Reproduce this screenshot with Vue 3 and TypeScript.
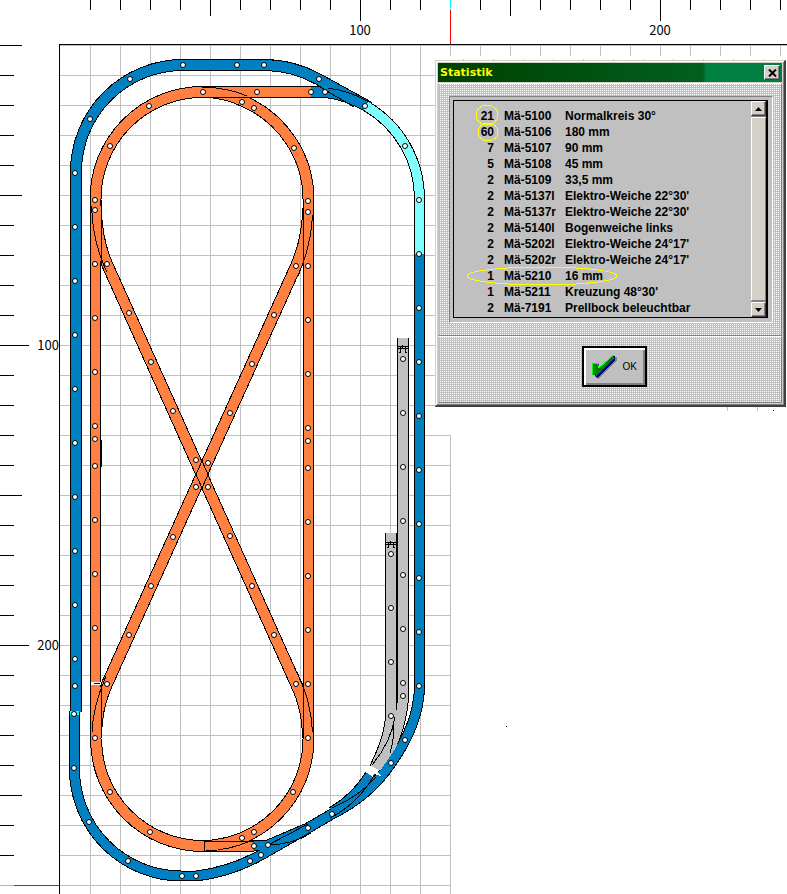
<script setup lang="ts">
interface Part { count: number; code: string; name: string }
interface Track { d: string; w: number; color: string }
type Point = [number, number]

const parts: Part[] = [
  { count: 21, code: 'Mä-5100', name: 'Normalkreis 30°' },
  { count: 60, code: 'Mä-5106', name: '180 mm' },
  { count: 7, code: 'Mä-5107', name: '90 mm' },
  { count: 5, code: 'Mä-5108', name: '45 mm' },
  { count: 2, code: 'Mä-5109', name: '33,5 mm' },
  { count: 2, code: 'Mä-5137l', name: "Elektro-Weiche 22°30'" },
  { count: 2, code: 'Mä-5137r', name: "Elektro-Weiche 22°30'" },
  { count: 2, code: 'Mä-5140l', name: 'Bogenweiche links' },
  { count: 2, code: 'Mä-5202l', name: "Elektro-Weiche 24°17'" },
  { count: 2, code: 'Mä-5202r', name: "Elektro-Weiche 24°17'" },
  { count: 1, code: 'Mä-5210', name: '16 mm' },
  { count: 1, code: 'Mä-5211', name: "Kreuzung 48°30'" },
  { count: 2, code: 'Mä-7191', name: 'Prellbock beleuchtbar' },
]

const range = (n: number): number[] => Array.from({ length: n }, (_, i) => i)

/* Rulers: one tick every 10 cm, longer ones at 50 and 100. */
const topTicks = range(70)
  .map((i) => ({ x: 90.5 + i * 30, step: i + 1 }))
  .filter((t) => t.step !== 13)
  .map((t) => ({ x: t.x, len: t.step % 10 === 0 ? 21 : t.step % 5 === 0 ? 16 : 10 }))
const leftTicks = range(28).map((i) => ({
  y: 45.5 + i * 30,
  len: i > 0 && i % 10 === 0 ? 29 : i % 5 === 0 ? 22 : 14,
}))
const gridX = range(12).map((i) => 90.5 + i * 30)
const gridY = range(28).map((i) => 75.5 + i * 30)
const gridStubs = range(60).map((i) => 450.5 + i * 30)

const blue = '#0080c0'
const cyan = '#80ffff'
const orange = '#ff8040'
const grey = '#c0c0c0'

const tracks: Track[] = [
  { d: 'M403 338 V696 Q402 728 380 770', w: 12, color: grey },
  { d: 'M391 533 V716 Q390 738 375 768', w: 12, color: grey },
  { d: 'M202 92 H311', w: 12, color: orange },
  { d: 'M204 846 H254', w: 12, color: orange },
  { d: 'M95.5 739 V198', w: 11, color: orange },
  { d: 'M308.5 198 V739', w: 11, color: orange },
  { d: 'M95.5 199 A107 107 0 0 1 202 92 Q226 92 243 101 A107 107 0 0 1 308.5 199', w: 12, color: orange },
  { d: 'M96 739 A107 107 0 0 0 202 846 A107 107 0 0 0 308.5 739', w: 12, color: orange },
  { d: 'M96 206 Q96 239 107 264 L296 684 Q308 708 308 738', w: 12, color: orange },
  { d: 'M308 208 Q308 239 296 266 L107 684 Q96 708 96 738', w: 12, color: orange },
  { d: 'M311 92 H325 Q346 94 369 107', w: 12, color: blue },
  { d: 'M253 846 L268 845 L308 828', w: 11, color: blue },
  { d: 'M332 812 Q356 798 370 775', w: 11, color: blue },
  { d: 'M76 712 V172 A107 107 0 0 1 183 65 H264 Q292 65 318 79 L367 106', w: 12, color: blue },
  { d: 'M74.5 711 V768 A107 107 0 0 0 182 876 H196 Q230 872 261 855 L308 828 L332 814 Q370 795 391 763 Q419 724 419.5 686 V254', w: 11, color: blue },
  { d: 'M366 106 A107 107 0 0 1 419.5 199 V254', w: 11, color: cyan },
]

/* Rails that stay visible where two pieces overlap in a turnout or crossing. */
const rails: string[] = [
  'M101 200 V264', 'M91.5 206 Q93 244 107 272',
  'M303.5 200 V266', 'M312.5 215 Q311 246 298 276',
  'M101.5 684 V736', 'M92 732 Q93 706 106 676',
  'M303.5 684 V738', 'M312.5 732 Q311 700 297 672',
  'M202 97.5 H250', 'M202 87 Q230 88 247 96',
  'M204.5 840 V851', 'M204 841.5 H254', 'M206 851 Q230 850 250 841',
  'M202 461 L208 474.5 L202 488 L196 474.5 Z',
  'M320 87 L354 107', 'M328 88 Q350 91 369 102',
  'M268 845 L308 824', 'M270 845 Q294 844 311 833',
  'M332 808 Q360 796 376 777', 'M375 774 Q358 804 330 818',
  'M395 717 Q391 742 372 765', 'M394 722 Q394 740 390 753', 'M101.5 440 V467',
]

const column = (x: number, ys: number[]): Point[] => ys.map((y): Point => [x, y])
const run = (start: number, n: number): number[] => range(n).map((i) => start + i * 54)

const joints: Point[] = [
  ...column(75, [...run(173, 10), 686]),
  ...column(74, [714, 768]),
  ...column(419, run(200, 10)),
  ...column(95, [200, 210, 264, 318, 372, 426, 439, 466, 520, 574, 628, 738]),
  ...column(308, [201, 212, 266, 320, 374, 428, 441, 468, 522, 576, 630, 684, 738]),
  ...column(403, [...run(359, 7), 696]),
  ...column(391, run(554, 4)),
  [183, 65], [237, 65], [264, 65], [130, 79], [90, 119], [319, 79], [365, 106], [405, 146],
  [203, 92], [257, 92], [311, 92], [325, 92], [149, 106], [110, 146], [242, 102], [254, 108], [294, 148],
  [107, 264], [129, 313], [151, 362], [173, 411], [196, 460], [208, 487], [230, 536], [252, 586], [274, 635], [296, 684],
  [296, 266], [274, 315], [252, 364], [230, 413], [208, 463], [196, 487], [173, 537], [151, 586], [129, 635], [107, 684],
  [110, 792], [150, 832], [293, 792], [254, 832], [242, 838], [254, 846], [268, 845],
  [89, 822], [128, 861], [182, 876], [196, 876], [250, 861], [261, 855], [308, 828], [332, 814], [391, 763], [405, 740],
]
</script>

<template>
  <main class="desktop">
    <svg class="plan" role="img" aria-label="Gleisplan" shape-rendering="crispEdges">
      <g class="grid">
        <path v-for="x in gridX" :key="'gx' + x" :d="`M${x} 45 V2000`" />
        <path d="M450.5 435 V2000" />
        <path v-for="y in gridY" :key="'gy' + y" :d="`M60 ${y} H${y > 430 ? 451 : 436}`" />
        <path v-for="x in gridStubs" :key="'gs' + x" :d="`M${x} 45 V56 M${x + 13} 59 v1`" />
        <path d="M60 45.5 H3000 M727.5 406 v5 M757.5 406 v5" />
      </g>
      <g class="ink">
        <path d="M59.5 2000 V44.5 H3000" />
        <path v-for="t in topTicks" :key="'t' + t.x" :d="`M${t.x} 0 V${t.len}`" />
        <path v-for="t in leftTicks" :key="'l' + t.y" :d="`M0 ${t.y} H${t.len}`" />
        <path d="M506 726.5 h1 M773 410.5 h1" />
      </g>
      <path class="cursor-start" d="M450.5 0 V10 M0 885.5 H14" />
      <path class="cursor-line" d="M450.5 10 V44 M14 885.5 H59" />
      <text class="scale" x="360" y="35" text-anchor="middle">100</text>
      <text class="scale" x="660" y="35" text-anchor="middle">200</text>
      <text class="scale" x="59" y="350" text-anchor="end">100</text>
      <text class="scale" x="59" y="650" text-anchor="end">200</text>

      <g fill="none">
        <path v-for="(t, i) in tracks" :key="'e' + i" :d="t.d" stroke="#000" :stroke-width="t.w" />
        <path v-for="(t, i) in tracks" :key="'b' + i" :d="t.d" :stroke="t.color" :stroke-width="t.w - 2" />
        <path v-for="(d, i) in rails" :key="'r' + i" :d="d" stroke="#000" />
      </g>
      <path d="M91 682 h10 v3 h-10 z" fill="#fff" />
      <path d="M94 683.5 h6" stroke="#000" />
      <path d="M70 711 h9 v4 h-9 z" fill="#00ffff" />
      <path d="M373 768 l4 3 4 5 -4 -1 -5 -4 z" fill="#fff" />
      <g class="ink">
        <path d="M398 346.5 h10 M398 348.5 h10 M400.5 346 v6 M399 352.5 h2 M405.5 346 v6 M405 352.5 h2 M402.5 345 v3" />
        <path d="M386 542.5 h10 M386 544.5 h10 M388.5 542 v5 M387 547.5 h2 M393.5 542 v5 M393 547.5 h2 M390.5 541 v3" />
      </g>
      <g class="joints" shape-rendering="auto">
        <circle v-for="([x, y], i) in joints" :key="'j' + i" :cx="x" :cy="y" r="2.5" />
      </g>
    </svg>

    <section class="window" role="dialog" aria-labelledby="window-title">
      <header class="titlebar">
        <h1 id="window-title">Statistik</h1>
        <button class="close" type="button" aria-label="Schließen">
          <svg width="9" height="8" viewBox="0 0 9 8"><path d="M1 0.5 L8 7.5 M8 0.5 L1 7.5" stroke="#000" stroke-width="2" /></svg>
        </button>
      </header>
      <div class="content">
        <div class="panel">
          <div class="listbox">
            <table>
              <tbody>
                <tr v-for="part in parts" :key="part.code">
                  <td class="count">{{ part.count }}</td>
                  <td class="code">{{ part.code }}</td>
                  <td>{{ part.name }}</td>
                </tr>
              </tbody>
            </table>
            <div class="scrollbar">
              <button type="button" aria-label="Nach oben">
                <svg width="7" height="4" viewBox="0 0 7 4"><path d="M0 4 L3.5 0 L7 4 Z" /></svg>
              </button>
              <div class="thumb"></div>
              <button type="button" aria-label="Nach unten">
                <svg width="7" height="4" viewBox="0 0 7 4"><path d="M0 0 L3.5 4 L7 0 Z" /></svg>
              </button>
            </div>
            <svg class="marks" width="170" height="200" aria-hidden="true" shape-rendering="crispEdges">
              <ellipse cx="33" cy="14" rx="11" ry="10" />
              <ellipse cx="34" cy="31" rx="10" ry="9" />
              <ellipse cx="88" cy="175" rx="75" ry="9" />
            </svg>
          </div>
        </div>
      </div>
      <footer class="actions">
        <button class="ok" type="button">
          <svg width="26" height="26" viewBox="0 0 26 26" aria-hidden="true" shape-rendering="crispEdges">
            <path d="M4 11 L8 12 L10 15 L23 3 H26 V6 L8 25 L4 23 Z" fill="#808080" />
            <path d="M2 10 L7 9 L9 14 L22 2 L24 2 L24 6 L6 24 L2 20 Z" fill="#000080" />
            <path d="M1 10 L6 9 L8 14 L22 1 L23 4 L6 22 L1 20 Z" fill="#008000" />
            <path d="M1.5 21 V10 L6.5 9 L8 14 L22.5 1" fill="none" stroke="#00ff00" />
          </svg>
          <span>OK</span>
        </button>
      </footer>
    </section>
  </main>
</template>

<style>
body { margin: 0; background: #fff; }
</style>

<style scoped>
.desktop {
  position: relative;
  min-height: 100vh;
  overflow: hidden;
  font-family: "Liberation Sans", Arial, sans-serif;
  color: #000;
}
.plan { display: block; width: 100%; height: 100vh; min-height: 894px; }
.grid { stroke: #c0c0c0; fill: none; }
.ink { stroke: #000; fill: none; }
.cursor-start { stroke: #00ffff; }
.cursor-line { stroke: #ff0000; }
.scale { font: 13px "Noto Sans CJK SC", "Liberation Sans", sans-serif; }
.joints { fill: #fff; stroke: #000; stroke-width: 1; }

.window {
  position: absolute;
  left: 435px;
  top: 60px;
  width: 351px;
  box-sizing: border-box;
  padding: 2px;
  background: #d4d0c8;
  border: 1px solid #d4d0c8;
  border-right: 2px solid #404040;
  border-bottom: 2px solid #404040;
  box-shadow: inset 1px 1px #fff, inset -1px -1px #808080;
}
.titlebar {
  display: flex;
  align-items: center;
  justify-content: space-between;
  height: 19px;
  padding: 0 2px;
  background: linear-gradient(90deg, #004000 0, #006020 77%, #008040 78%);
}
h1 { margin: 0; font: bold 11px "DejaVu Sans", Verdana, sans-serif; color: #ffff00; }
button { color: #000; cursor: pointer; }
.close, .scrollbar button {
  display: flex;
  align-items: center;
  justify-content: center;
  flex: none;
  padding: 0;
  background: #d4d0c8;
  border: 1px solid;
  border-color: #fff #404040 #404040 #fff;
  box-shadow: inset -1px -1px #808080;
}
.close { width: 16px; height: 15px; }
.content, .actions {
  background: conic-gradient(#fff 25%, #c0c0c0 0) 0 0 / 2px 2px;
  border: 1px solid #fff;
  border-right-color: #808080;
  border-left-color: #c0c0c0;
}
.content { margin-top: 1px; padding: 12px 8px 12px 10px; border-bottom: 1px solid #808080; }
.panel {
  padding: 3px 4px 4px 3px;
  background: #c0c0c0;
  border: 1px solid;
  border-color: #808080 #fff #fff #808080;
}
.listbox {
  position: relative;
  display: flex;
  justify-content: space-between;
  border: 1px solid #000;
  border-right-width: 2px;
  background: #c0c0c0;
}
table { margin: 7px 0 1px; border-collapse: collapse; }
td { height: 16px; padding: 0; font-size: 12px; line-height: 16px; font-weight: bold; white-space: nowrap; }
.count { width: 40px; text-align: right; }
.code { width: 61px; padding-left: 10px; }
.scrollbar { display: flex; flex-direction: column; gap: 1px; width: 15px; background: #808080; }
.scrollbar button { width: 15px; height: 15px; }
.thumb { flex: 1; background: #d4d0c8; border: 1px solid; border-color: #fff #808080 #808080 #fff; }
.marks { position: absolute; left: 0; top: 0; fill: none; stroke: #ffff00; pointer-events: none; }
.actions { display: flex; justify-content: center; padding: 9px 0 15px 8px; border-bottom-color: #808080; }
.ok {
  display: flex;
  align-items: center;
  gap: 6px;
  width: 65px;
  height: 41px;
  padding: 0 0 0 7px;
  border: 2px solid #000;
  background: #c0c0c0;
  box-shadow: inset 1px 1px #fff, inset 2px 2px #fff, inset -2px -2px #808080;
  font: 10px "Liberation Sans", Arial, sans-serif;
}
</style>
